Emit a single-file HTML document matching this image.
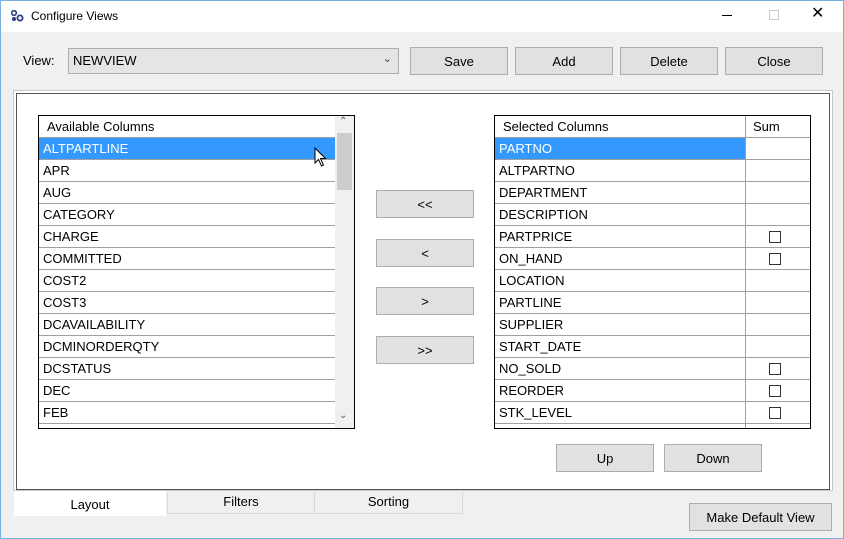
<!DOCTYPE html><html><head><style>
*{box-sizing:border-box;margin:0;padding:0}
body{width:844px;height:539px;background:#f0f0f0;font-family:"Liberation Sans",sans-serif;font-size:13px;color:#000;position:relative;overflow:hidden;border:1px solid #7ab0e0}
.a{position:absolute}
.btn{position:absolute;background:#e1e1e1;border:1px solid #adadad;display:flex;align-items:center;justify-content:center;font-size:13px}
.row{height:22px;border-bottom:1px solid #a0a0a0;line-height:21px;padding-left:4px;white-space:nowrap;position:relative}
.sel{background:#3399ff;color:#fff}
.cb{position:absolute;left:24px;top:5px;width:12px;height:12px;border:1px solid #333;background:#fff}
</style></head><body>
<div class="a" style="left:0;top:0;width:842px;height:31px;background:#fff"></div>
<svg class="a" style="left:9px;top:9px" width="14" height="12" viewBox="0 0 14 12"><circle cx="4" cy="3" r="2.3" fill="none" stroke="#2a3a8a" stroke-width="1.6"/><circle cx="4" cy="9" r="2" fill="#2a3a8a"/><circle cx="10" cy="8" r="2.6" fill="none" stroke="#2a3a8a" stroke-width="1.8"/></svg>
<div class="a" style="left:30px;top:8px;font-size:12px">Configure Views</div>
<div class="a" style="left:721px;top:14px;width:10px;height:1px;background:#000"></div>
<div class="a" style="left:768px;top:9px;width:10px;height:10px;border:1px solid #ccc"></div>
<div class="a" style="left:810px;top:2px;font-size:16px">✕</div>
<div class="a" style="left:22px;top:52px">View:</div>
<div class="a" style="left:67px;top:47px;width:331px;height:26px;background:#e5e5e5;border:1px solid #adadad;padding:4px 4px;font-size:13px">NEWVIEW<span style="position:absolute;right:6px;top:3px;font-size:11px;color:#444">&#8964;</span></div>
<div class="btn" style="left:409px;top:46px;width:98px;height:28px">Save</div>
<div class="btn" style="left:514px;top:46px;width:98px;height:28px">Add</div>
<div class="btn" style="left:619px;top:46px;width:98px;height:28px">Delete</div>
<div class="btn" style="left:724px;top:46px;width:98px;height:28px">Close</div>
<div class="a" style="left:12px;top:89px;width:820px;height:401px;border:1px solid #c8c8c8;background:#fff"></div>
<div class="a" style="left:15px;top:92px;width:814px;height:397px;border:1px solid #555;background:#fff"></div>
<div class="a" style="left:37px;top:114px;width:317px;height:314px;border:1px solid #000;overflow:hidden">
<div style="width:296px">
<div class="row" style="padding-left:8px">Available Columns</div>
<div class="row sel">ALTPARTLINE</div>
<div class="row">APR</div><div class="row">AUG</div><div class="row">CATEGORY</div><div class="row">CHARGE</div><div class="row">COMMITTED</div><div class="row">COST2</div><div class="row">COST3</div><div class="row">DCAVAILABILITY</div><div class="row">DCMINORDERQTY</div><div class="row">DCSTATUS</div><div class="row">DEC</div><div class="row">FEB</div>
</div>
<div class="a" style="left:296px;top:0;width:19px;height:312px;background:#f0f0f0"></div>
<div class="a" style="left:298px;top:17px;width:15px;height:57px;background:#cdcdcd"></div>
<div class="a" style="left:300px;top:0;font-size:10px;color:#555">&#8963;</div>
<div class="a" style="left:300px;top:294px;font-size:10px;color:#555">&#8964;</div>
</div>
<svg class="a" style="left:313px;top:146px" width="14" height="22" viewBox="0 0 14 22"><path d="M1 1 L1 16 L4.5 12.5 L7.5 19 L9.5 18 L6.5 11.5 L11.5 11.5 Z" fill="#fff" stroke="#000"/></svg>
<div class="btn" style="left:375px;top:189px;width:98px;height:28px">&lt;&lt;</div>
<div class="btn" style="left:375px;top:238px;width:98px;height:28px">&lt;</div>
<div class="btn" style="left:375px;top:286px;width:98px;height:28px">&gt;</div>
<div class="btn" style="left:375px;top:335px;width:98px;height:28px">&gt;&gt;</div>
<div class="a" style="left:493px;top:114px;width:317px;height:314px;border:1px solid #000;overflow:hidden">
<div style="position:relative">
<div class="a" style="left:250px;top:0;width:1px;height:312px;background:#a0a0a0"></div>
<div class="row" style="padding-left:8px">Selected Columns<span style="position:absolute;left:258px">Sum</span></div>
<div class="row"><span class="sel" style="display:block;width:250px;margin-left:-4px;padding-left:4px">PARTNO</span></div>
<div class="row">ALTPARTNO</div><div class="row">DEPARTMENT</div><div class="row">DESCRIPTION</div>
<div class="row">PARTPRICE<span class="cb" style="left:274px"></span></div>
<div class="row">ON_HAND<span class="cb" style="left:274px"></span></div>
<div class="row">LOCATION</div><div class="row">PARTLINE</div><div class="row">SUPPLIER</div><div class="row">START_DATE</div>
<div class="row">NO_SOLD<span class="cb" style="left:274px"></span></div>
<div class="row">REORDER<span class="cb" style="left:274px"></span></div>
<div class="row">STK_LEVEL<span class="cb" style="left:274px"></span></div>
</div></div>
<div class="btn" style="left:555px;top:443px;width:98px;height:28px">Up</div>
<div class="btn" style="left:663px;top:443px;width:98px;height:28px">Down</div>
<div class="a" style="left:166px;top:491px;width:148px;height:22px;border:1px solid #d9d9d9;border-top:none;text-align:center;line-height:20px">Filters</div>
<div class="a" style="left:314px;top:491px;width:148px;height:22px;border:1px solid #d9d9d9;border-top:none;border-left:none;text-align:center;line-height:20px">Sorting</div>
<div class="a" style="left:13px;top:490px;width:152px;height:25px;background:#fff;text-align:center;line-height:28px">Layout</div>
<div class="btn" style="left:688px;top:502px;width:143px;height:28px">Make Default View</div>
</body></html>
